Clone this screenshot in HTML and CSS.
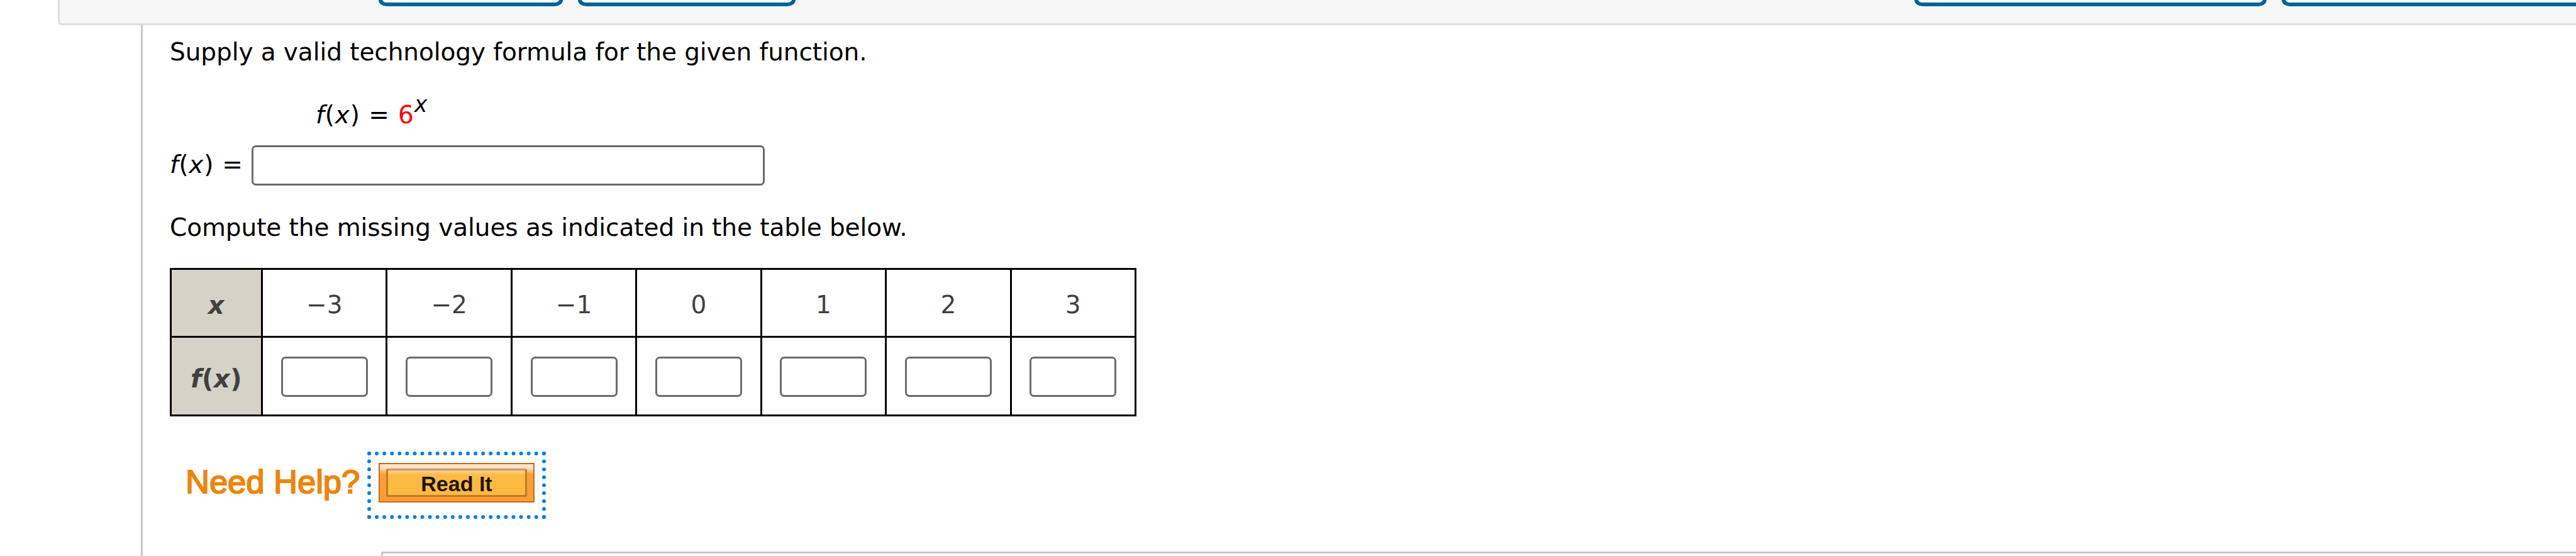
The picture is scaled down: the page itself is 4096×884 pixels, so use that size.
FILE: index.html
```html
<!DOCTYPE html>
<html lang="en">
<head>
    <meta charset="UTF-8">
    <meta name="viewport" content="width=device-width, initial-scale=1.0">
    <title>Technology Formula</title>
    <link rel="stylesheet" href="styles.css">
</head>
<body>
    <div class="toolbar">
        <div class="tool-button details"></div>
        <div class="tool-button notes"></div>
        <div class="tool-button teacher"></div>
        <div class="tool-button practice"></div>
    </div>
    <div class="question">
        <p class="line intro">Supply a valid technology formula for the given function.</p>
        <p class="line formula"><i>f</i>(<i>x</i>) = <span class="red">6</span><i class="power">x</i></p>
        <div class="line answer">
            <span class="answer-label"><i>f</i>(<i>x</i>) =</span>
            <input type="text" class="answer-input">
        </div>
        <p class="line compute">Compute the missing values as indicated in the table below.</p>
        <table class="values">
            <colgroup>
                <col class="head-col">
                <col span="7">
            </colgroup>
            <tr class="x-row">
                <th><i>x</i></th>
                <td>−3</td>
                <td>−2</td>
                <td>−1</td>
                <td>0</td>
                <td>1</td>
                <td>2</td>
                <td>3</td>
            </tr>
            <tr class="fx-row">
                <th><i>f</i>(<i>x</i>)</th>
                <td><input type="text"></td>
                <td><input type="text"></td>
                <td><input type="text"></td>
                <td><input type="text"></td>
                <td><input type="text"></td>
                <td><input type="text"></td>
                <td><input type="text"></td>
            </tr>
        </table>
        <div class="help">
            <span class="help-title">Need Help?</span>
            <div class="focus-ring">
                <button class="read-it"><span>Read It</span></button>
            </div>
        </div>
        <div class="next-box"></div>
    </div>
</body>
</html>
```

FILE: styles.css
```css
* {
    box-sizing: border-box;
}

body {
    margin: 0;
    height: 884px;
    overflow: hidden;
    background-color: #fff;
    font-family: Verdana, "DejaVu Sans", sans-serif;
    font-size: 39px;
    color: #000;
}

/* top bar, only the lower edge of the buttons shows */
.toolbar {
    display: flex;
    align-items: flex-start;
    height: 40px;
    margin-left: 92px;
    padding-left: 507px;
    overflow: hidden;
    background-color: #f7f7f7;
    border-left: 3px solid #dcdcdc;
    border-bottom: 3px solid #dcdcdc;
    border-bottom-left-radius: 6px;
}

.tool-button {
    flex: none;
    height: 10px;
    background-color: #fff;
    border: 6px solid #006298;
    border-top: none;
    border-radius: 0 0 13px 13px / 0 0 10px 10px;
}

.details {
    width: 293px;
}

.notes {
    width: 346px;
    margin-left: 24px;
}

.teacher {
    width: 560px;
    margin-left: 1779px;
}

.practice {
    width: 600px;
    margin-left: 24px;
}

.question {
    height: 844px;
    margin-left: 224px;
    padding-left: 43px;
    border-left: 3px solid #c8c8c8;
}

.line {
    margin: 0;
    line-height: 50px;
    letter-spacing: -0.08px;
    white-space: pre;
}

.intro {
    padding-top: 18px;
}

.formula {
    padding: 50px 0 0 232px;
    letter-spacing: 0.9px;
}

.red {
    color: #f00;
}

.power {
    font-size: 35px;
    line-height: 0;
    vertical-align: 18px;
}

.answer {
    display: flex;
    margin-top: 23px;
    letter-spacing: 0.7px;
}

.answer-label {
    width: 130px;
    padding-top: 6px;
}

input {
    display: block;
    height: 64px;
    padding: 0;
    background-color: #fff;
    border: 3px solid #6b6b6b;
    border-radius: 7px;
}

.answer-input {
    width: 816px;
}

.compute {
    padding-top: 42px;
}

.values {
    width: 1537px;
    margin-top: 39px;
    table-layout: fixed;
    border-collapse: collapse;
    color: #404040;
}

.head-col {
    width: 145px;
}

th, td {
    padding: 7px 0 0;
    border: 3px solid #000;
    text-align: center;
    line-height: 50px;
}

th {
    background-color: #d6d2c7;
    font-size: 40px;
    letter-spacing: 0.6px;
}

.x-row {
    height: 108px;
}

.fx-row {
    height: 125px;
}

.fx-row td {
    padding-top: 2px;
}

td input {
    width: 138px;
    margin: 0 auto;
}

.help {
    display: flex;
    margin-top: 56px;
    padding-left: 25px;
}

.help-title {
    width: 289px;
    padding-top: 18px;
    font-family: Helvetica, "Liberation Sans", sans-serif;
    font-size: 52.5px;
    line-height: 60px;
    color: #ee8411;
    -webkit-text-stroke: 2px #ee8411;
}

.focus-ring {
    width: 284px;
    height: 107px;
    padding: 12px;
    border: 6px dotted #007fe6;
}

.read-it {
    display: block;
    width: 248px;
    height: 63px;
    padding: 7px 10px;
    border: 2px solid #b87026;
    background: linear-gradient(#ffe4cb 0, #ffe0c2 6px, #fd9f38 16px, #fc9c30 100%);
}

.read-it span {
    display: block;
    height: 45px;
    border: 3px solid #bb7b28;
    border-top-color: #bf9c74;
    border-radius: 3px;
    background: linear-gradient(#fdd08a 0, #fdba43 8px);
    font-family: Helvetica, "Liberation Sans", sans-serif;
    font-size: 34px;
    font-weight: bold;
    line-height: 42px;
    color: #1f1505;
}

.next-box {
    height: 7px;
    margin: 52px 0 0 336px;
    border-top: 3px solid #c8c8c8;
    border-left: 3px solid #c8c8c8;
}
```
